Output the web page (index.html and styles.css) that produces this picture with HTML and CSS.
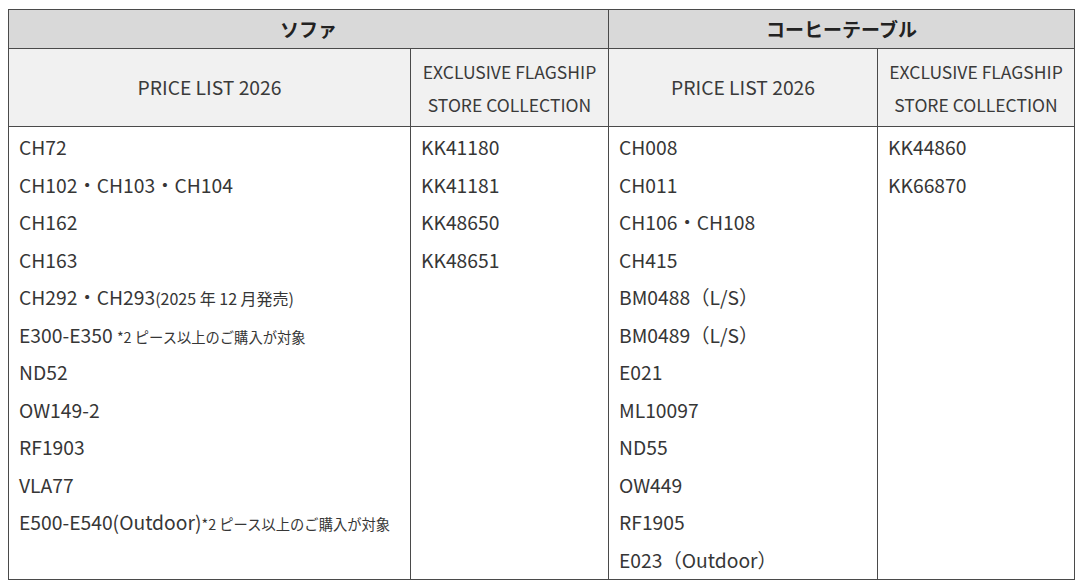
FILE: index.html
```html
<!DOCTYPE html>
<html lang="ja">
<head>
<meta charset="utf-8">
<link rel="stylesheet" href="styles.css">
</head>
<body>
<table class="tbl">
  <colgroup>
    <col class="c1"><col class="c2"><col class="c3"><col class="c4">
  </colgroup>
  <thead>
    <tr class="h1">
      <th colspan="2">ソファ</th>
      <th colspan="2">コーヒーテーブル</th>
    </tr>
    <tr class="h2">
      <th class="pl">PRICE LIST 2026</th>
      <th>EXCLUSIVE FLAGSHIP<br>STORE COLLECTION</th>
      <th class="pl">PRICE LIST 2026</th>
      <th>EXCLUSIVE FLAGSHIP<br>STORE COLLECTION</th>
    </tr>
  </thead>
  <tbody>
    <tr>
      <td>
        <div class="ln">CH72</div>
        <div class="ln">CH102・CH103・CH104</div>
        <div class="ln">CH162</div>
        <div class="ln">CH163</div>
        <div class="ln">CH292・CH293<span class="sm">(2025 年 12 月発売)</span></div>
        <div class="ln">E300-E350 <span class="note">*2 ピース以上のご購入が対象</span></div>
        <div class="ln">ND52</div>
        <div class="ln">OW149-2</div>
        <div class="ln">RF1903</div>
        <div class="ln">VLA77</div>
        <div class="ln">E500-E540(Outdoor)<span class="note">*2 ピース以上のご購入が対象</span></div>
      </td>
      <td>
        <div class="ln">KK41180</div>
        <div class="ln">KK41181</div>
        <div class="ln">KK48650</div>
        <div class="ln">KK48651</div>
      </td>
      <td>
        <div class="ln">CH008</div>
        <div class="ln">CH011</div>
        <div class="ln">CH106・CH108</div>
        <div class="ln">CH415</div>
        <div class="ln">BM0488（L/S）</div>
        <div class="ln">BM0489（L/S）</div>
        <div class="ln">E021</div>
        <div class="ln">ML10097</div>
        <div class="ln">ND55</div>
        <div class="ln">OW449</div>
        <div class="ln">RF1905</div>
        <div class="ln">E023（Outdoor）</div>
      </td>
      <td>
        <div class="ln">KK44860</div>
        <div class="ln">KK66870</div>
      </td>
    </tr>
  </tbody>
</table>
</body>
</html>
```

FILE: styles.css
```css
html, body {
  margin: 0;
  padding: 0;
  background: #ffffff;
}
body {
  padding: 9px 6px 0 8px;
  font-family: "Noto Sans CJK JP", "Noto Sans", sans-serif;
  color: #363636;
}
.tbl {
  border-collapse: collapse;
  width: 1066px;
  table-layout: fixed;
}
.c1 { width: 402px; }
.c2 { width: 198px; }
.c3 { width: 269px; }
.c4 { width: 197px; }
.tbl th, .tbl td {
  border: 1px solid #4a4a4a;
}
.h1 th {
  background: #d9d9d9;
  height: 38px;
  padding: 0;
  font-size: 19px;
  font-weight: 700;
  color: #222222;
  text-align: center;
  line-height: 24px;
}
.h2 th {
  background: #f1f1f1;
  height: 77px;
  padding: 0;
  font-size: 17.5px;
  font-weight: 400;
  color: #3a3a3a;
  text-align: center;
  line-height: 33px;
}
.h2 th.pl {
  font-size: 19.3px;
}
.tbl td {
  vertical-align: top;
  padding: 2px 10px 0 10px;
  font-size: 19.3px;
  height: 446px;
}
.ln {
  line-height: 37.5px;
  height: 37.5px;
  white-space: nowrap;
}
.sm {
  font-size: 16px;
}
.note {
  font-size: 14.3px;
}
```
